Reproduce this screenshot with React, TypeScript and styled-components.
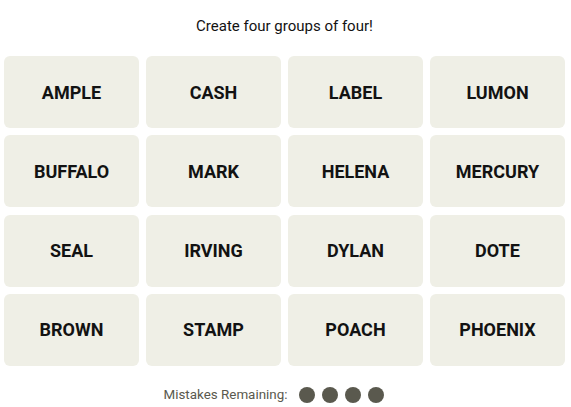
import React from "react"
import styled, { createGlobalStyle } from "styled-components"

const Global = createGlobalStyle`
  body {
    margin: 0;
    background: #fff;
    font-family: "Roboto", "Liberation Sans", sans-serif;
  }
`

const Page = styled.main`
  width: 571px;
  height: 407px;
  padding: 0 6px 0 4px;
  box-sizing: border-box;
  display: flex;
  flex-direction: column;
  align-items: stretch;
`

const Title = styled.p`
  margin: 17px 0 0;
  height: 18px;
  text-align: center;
  font-size: 15px;
  line-height: 18px;
  color: #121212;
`

const Board = styled.section`
  margin-top: 21px;
  display: grid;
  grid-template-columns: repeat(4, 135px);
  grid-template-rows: repeat(4, 72px);
  column-gap: 7px;
  row-gap: 7.33px;
`

const Tile = styled.button`
  border: none;
  border-radius: 6px;
  background: #efefe6;
  color: #121212;
  font-family: "Roboto", "Liberation Sans", sans-serif;
  font-weight: 700;
  font-size: 18px;
  text-transform: uppercase;
  padding: 0;
`

const Footer = styled.div`
  margin-top: 21px;
  display: flex;
  align-items: center;
  justify-content: center;
  gap: 12px;
  padding-right: 21px;
  font-size: 13.4px;
  color: #5a594e;
`

const Dots = styled.div`
  display: flex;
  gap: 7px;
`

const Dot = styled.span`
  width: 16px;
  height: 16px;
  border-radius: 50%;
  background: #5a594e;
`

const words = [
  "Ample", "Cash", "Label", "Lumon",
  "Buffalo", "Mark", "Helena", "Mercury",
  "Seal", "Irving", "Dylan", "Dote",
  "Brown", "Stamp", "Poach", "Phoenix",
]

export default function App() {
  return (
    <Page>
      <Global />
      <Title>Create four groups of four!</Title>
      <Board>
        {words.map(w => (
          <Tile key={w}>{w}</Tile>
        ))}
      </Board>
      <Footer>
        Mistakes Remaining:
        <Dots>
          {[0, 1, 2, 3].map(i => <Dot key={i} />)}
        </Dots>
      </Footer>
    </Page>
  )
}
